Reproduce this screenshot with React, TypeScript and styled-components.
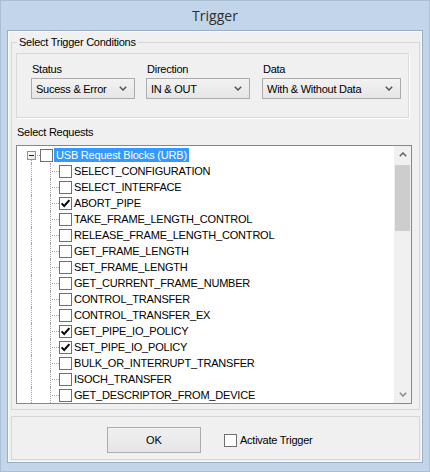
import React from "react"
import styled, { createGlobalStyle } from "styled-components"

const GlobalStyles = createGlobalStyle`
  html, body {
    margin: 0;
    padding: 0;
  }
  *,
  *:before,
  *:after {
    box-sizing: border-box;
  }
  body {
    font-family: "Liberation Sans", Arial, sans-serif;
    background: #c3d6e9;
  }
`

const uiFont = `"Liberation Sans", Arial, sans-serif`

const Window = styled.div`
  width: 430px;
  height: 472px;
  display: flex;
  flex-direction: column;
  padding: 0 6px 8px;
  background: #c3d6e9;
  border: 1px solid #a9bfd5;
`

const TitleBar = styled.div`
  height: 29px;
  display: flex;
  align-items: center;
  justify-content: center;
  font-family: "Open Sans", ${uiFont};
  font-size: 14px;
  color: #2e2e2e;
`

const Client = styled.div`
  flex: 1;
  display: flex;
  flex-direction: column;
  padding: 0 2px 0 3px;
  background: #f0f0f0;
  border: 1px solid #98aec4;
  box-shadow: inset 1px 1px 0 #fafafa, inset -1px -1px 0 #fafafa;
`

const GroupBox = styled.fieldset`
  margin: 4px 0 0;
  padding: 0 0 5px 4px;
  min-width: 0;
  border: 1px solid #d6d6d6;
`

const Legend = styled.legend`
  margin-left: 1px;
  padding: 0 2px;
  font-family: ${uiFont};
  font-size: 11px;
  line-height: 14px;
  letter-spacing: -0.25px;
  color: #000;
`

const ConditionsPanel = styled.div`
  margin-top: 4px;
  width: 393px;
  height: 65px;
  display: flex;
  padding: 8px 0 0 14px;
  border: 1px solid #d9d9d9;
  box-shadow: 1px 1px 0 #fff;
`

const Field = styled.div<{ $width: number; $gap: number }>`
  width: ${(p) => p.$width}px;
  margin-right: ${(p) => p.$gap}px;
  display: flex;
  flex-direction: column;
`

const FieldLabel = styled.div`
  font-size: 11px;
  line-height: 14px;
  letter-spacing: -0.25px;
  color: #000;
  margin: 0 0 2px 1px;
`

const Dropdown = styled.div`
  height: 21px;
  display: flex;
  align-items: center;
  justify-content: space-between;
  padding: 0 7px 0 4px;
  border: 1px solid #acacac;
  background: linear-gradient(#f2f2f2, #e6e6e6);
  font-size: 11px;
  letter-spacing: -0.25px;
  color: #000;
`

const SectionLabel = styled.div`
  margin: 7px 0 0 1px;
  font-size: 11px;
  line-height: 14px;
  letter-spacing: -0.25px;
  color: #000;
`

const TreeBox = styled.div`
  margin-top: 6px;
  width: 396px;
  height: 259px;
  display: flex;
  border: 1px solid #828790;
  background: #fff;
`

const TreeRows = styled.div`
  flex: 1;
  display: flex;
  flex-direction: column;
  padding-top: 1px;
  overflow: hidden;
`

const Row = styled.div`
  height: 16px;
  flex-shrink: 0;
  display: flex;
  align-items: center;
`

const Indent = styled.span<{ $w: number }>`
  width: ${(p) => p.$w}px;
  flex-shrink: 0;
`

const dots = `repeating-linear-gradient(to right, #a0a0a0 0 1px, transparent 1px 2px)`

const Guide = styled.span`
  width: 19px;
  align-self: stretch;
  flex-shrink: 0;
  border-left: 1px dotted #a0a0a0;
`

const Branch = styled.span`
  width: 9px;
  align-self: stretch;
  flex-shrink: 0;
  border-left: 1px dotted #a0a0a0;
  background: ${dots} 1px 8px / 100% 1px no-repeat;
`

const ExpandCell = styled.span`
  width: 9px;
  align-self: stretch;
  flex-shrink: 0;
  display: flex;
  flex-direction: column;
  padding-top: 4px;
`

const ExpandBox = styled.span`
  width: 9px;
  height: 9px;
  display: flex;
  align-items: center;
  justify-content: center;
  border: 1px solid #919191;
  background: linear-gradient(135deg, #fff, #e3e3e3);
`

const Minus = styled.span`
  width: 5px;
  height: 1px;
  background: #202020;
`

const Tail = styled.span`
  flex: 1;
  margin-left: 4px;
  border-left: 1px dotted #a0a0a0;
`

const Stub = styled.span`
  width: 4px;
  align-self: stretch;
  flex-shrink: 0;
  background: ${dots} 1px 8px / 100% 1px no-repeat;
`

const Box = styled.span`
  width: 13px;
  height: 13px;
  flex-shrink: 0;
  display: flex;
  align-items: center;
  justify-content: center;
  border: 1px solid #6f6f6f;
  background: #fff;
`

const ItemText = styled.span<{ $selected?: boolean }>`
  margin-left: ${(p) => (p.$selected ? 1 : 0)}px;
  padding: 0 2px;
  height: 14px;
  line-height: 14px;
  font-size: 11px;
  letter-spacing: -0.2px;
  white-space: nowrap;
  color: ${(p) => (p.$selected ? "#fff" : "#000")};
  background: ${(p) => (p.$selected ? "#3399ff" : "transparent")};
`

const Scrollbar = styled.div`
  width: 17px;
  flex-shrink: 0;
  display: flex;
  flex-direction: column;
  background: #f0f0f0;
`

const ScrollButton = styled.div`
  height: 17px;
  flex-shrink: 0;
  display: flex;
  align-items: center;
  justify-content: center;
`

const Track = styled.div`
  flex: 1;
  padding: 2px 1px 0;
`

const Thumb = styled.div`
  height: 66px;
  background: #cdcdcd;
`

const ActionPanel = styled.div`
  margin-top: 6px;
  height: 44px;
  display: flex;
  align-items: center;
  padding: 10px 0 6px 95px;
  border: 1px solid #d6d6d6;
`

const Button = styled.button`
  width: 94px;
  height: 26px;
  margin: 0;
  padding: 0;
  border: 1px solid #adadad;
  background: linear-gradient(#f0f0f0, #e5e5e5);
  font-family: ${uiFont};
  font-size: 11px;
  color: #000;
`

const CheckLabel = styled.label`
  margin-left: 23px;
  display: flex;
  align-items: center;
  gap: 3px;
  font-size: 11px;
  letter-spacing: -0.25px;
  color: #000;
`

const Chevron = ({ up, color = "#555" }: { up?: boolean; color?: string }) => (
  <svg width="8" height="5" viewBox="0 0 8 5">
    <path
      d={up ? "M0.8 4.2 L4 1 L7.2 4.2" : "M0.8 0.8 L4 4 L7.2 0.8"}
      fill="none"
      stroke={color}
      strokeWidth="1.5"
    />
  </svg>
)

const Checkbox = ({ checked }: { checked?: boolean }) => (
  <Box>
    {checked && (
      <svg width="11" height="11" viewBox="0 0 11 11">
        <path d="M1.6 5.4 L4.2 8 L9.4 2.2" fill="none" stroke="#000" strokeWidth="1.9" />
      </svg>
    )}
  </Box>
)

const requests: [string, boolean][] = [
  ["SELECT_CONFIGURATION", false],
  ["SELECT_INTERFACE", false],
  ["ABORT_PIPE", true],
  ["TAKE_FRAME_LENGTH_CONTROL", false],
  ["RELEASE_FRAME_LENGTH_CONTROL", false],
  ["GET_FRAME_LENGTH", false],
  ["SET_FRAME_LENGTH", false],
  ["GET_CURRENT_FRAME_NUMBER", false],
  ["CONTROL_TRANSFER", false],
  ["CONTROL_TRANSFER_EX", false],
  ["GET_PIPE_IO_POLICY", true],
  ["SET_PIPE_IO_POLICY", true],
  ["BULK_OR_INTERRUPT_TRANSFER", false],
  ["ISOCH_TRANSFER", false],
  ["GET_DESCRIPTOR_FROM_DEVICE", false],
]

const fields = [
  { label: "Status", value: "Sucess & Error", width: 104, gap: 11 },
  { label: "Direction", value: "IN & OUT", width: 104, gap: 12 },
  { label: "Data", value: "With & Without Data", width: 139, gap: 0 },
]

const App = () => (
  <Window>
    <GlobalStyles />
    <TitleBar>Trigger</TitleBar>
    <Client>
      <GroupBox>
        <Legend>Select Trigger Conditions</Legend>
        <ConditionsPanel>
          {fields.map((f) => (
            <Field key={f.label} $width={f.width} $gap={f.gap}>
              <FieldLabel>{f.label}</FieldLabel>
              <Dropdown>
                <span>{f.value}</span>
                <Chevron />
              </Dropdown>
            </Field>
          ))}
        </ConditionsPanel>
        <SectionLabel>Select Requests</SectionLabel>
        <TreeBox>
          <TreeRows>
            <Row>
              <Indent $w={10} />
              <ExpandCell>
                <ExpandBox>
                  <Minus />
                </ExpandBox>
                <Tail />
              </ExpandCell>
              <Stub />
              <Checkbox />
              <ItemText $selected>USB Request Blocks (URB)</ItemText>
            </Row>
            {requests.map(([name, checked]) => (
              <Row key={name}>
                <Indent $w={14} />
                <Guide />
                <Branch />
                <Checkbox checked={checked} />
                <ItemText>{name}</ItemText>
              </Row>
            ))}
          </TreeRows>
          <Scrollbar>
            <ScrollButton>
              <Chevron up color="#606060" />
            </ScrollButton>
            <Track>
              <Thumb />
            </Track>
            <ScrollButton>
              <Chevron color="#8a8a8a" />
            </ScrollButton>
          </Scrollbar>
        </TreeBox>
      </GroupBox>
      <ActionPanel>
        <Button>OK</Button>
        <CheckLabel>
          <Checkbox />
          Activate Trigger
        </CheckLabel>
      </ActionPanel>
    </Client>
  </Window>
)

export default App
